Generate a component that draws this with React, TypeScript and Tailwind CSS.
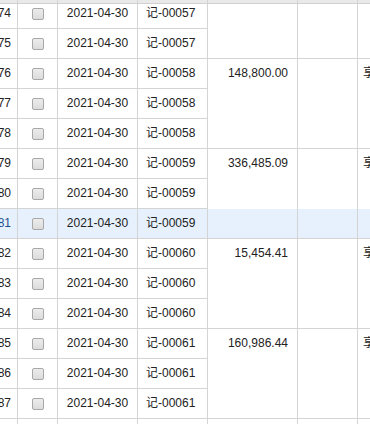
import React from "react";

type Row = { n: number; v: string; first: boolean; last: boolean; amount?: string; hl?: boolean };

const groups: { v: string; rows: number[]; amount?: string; topHidden?: boolean }[] = [
  { v: "00057", rows: [74, 75], topHidden: true },
  { v: "00058", rows: [76, 77, 78], amount: "148,800.00" },
  { v: "00059", rows: [79, 80, 81], amount: "336,485.09" },
  { v: "00060", rows: [82, 83, 84], amount: "15,454.41" },
  { v: "00061", rows: [85, 86, 87], amount: "160,986.44" },
  { v: "00062", rows: [88], amount: "" },
];

const rows: Row[] = [];
groups.forEach((g) => {
  g.rows.forEach((n, i) => {
    rows.push({
      n,
      v: g.v,
      first: i === 0 && !g.topHidden,
      last: i === g.rows.length - 1,
      amount: i === 0 ? g.amount : undefined,
      hl: n === 81,
    });
  });
});

function Checkbox() {
  return (
    <div className="w-[12px] h-[12px] rounded-[2px] border border-[#a8a8a8] bg-gradient-to-b from-[#ececec] to-[#dcdcdc]" />
  );
}

export default function App() {
  return (
    <div
      className="relative w-[370px] h-[424px] overflow-hidden bg-white text-[12px] text-[#222]"
      style={{ fontFamily: '"Liberation Sans", Arial, "Noto Sans CJK SC", sans-serif' }}
    >
      <div className="mt-[-1px] flex flex-col">
        {rows.map((r) => (
          <div key={r.n} className={`flex h-[30px] shrink-0 ${r.hl ? "bg-[#e6f1fd]" : ""}`}>
            <div className={`w-[18px] shrink-0 border-r border-b border-[#d4d4d4] overflow-hidden flex justify-end pr-[6px] leading-[29px] whitespace-nowrap ${r.hl ? "text-[#1f4e8c]" : ""}`}>
              1{r.n}
            </div>
            <div className="w-[40px] shrink-0 border-r border-b border-[#d4d4d4] flex items-center justify-center">
              <Checkbox />
            </div>
            <div className="w-[80px] shrink-0 border-r border-b border-[#d4d4d4] text-center leading-[29px]">
              2021-04-30
            </div>
            <div className="w-[70px] shrink-0 border-r border-b border-[#d4d4d4] pl-[8px] leading-[29px] whitespace-nowrap">
              记-{r.v}
            </div>
            <div className={`w-[90px] shrink-0 border-r border-[#d4d4d4] ${r.last ? "border-b" : ""} text-right pr-[9px] leading-[29px]`}>
              {r.amount ?? ""}
            </div>
            <div className={`w-[60px] shrink-0 border-r border-[#d4d4d4] ${r.last ? "border-b" : ""}`} />
            <div className={`w-[120px] shrink-0 border-r border-[#d4d4d4] ${r.last ? "border-b" : ""} pl-[5px] leading-[29px] whitespace-nowrap`}>
              {r.first && r.amount ? "享受" : ""}
            </div>
          </div>
        ))}
      </div>
      <div className="absolute left-0 top-0 flex h-[4px] w-[500px] bg-[#e9e9e9] border-b border-[#d0d0d0]">
        <div className="w-[18px] shrink-0 border-r border-[#d4d4d4]" />
        <div className="w-[40px] shrink-0 border-r border-[#d4d4d4]" />
        <div className="w-[80px] shrink-0 border-r border-[#d4d4d4]" />
        <div className="w-[70px] shrink-0 border-r border-[#d4d4d4]" />
        <div className="w-[90px] shrink-0 border-r border-[#d4d4d4]" />
        <div className="w-[60px] shrink-0 border-r border-[#d4d4d4]" />
        <div className="w-[120px] shrink-0 border-r border-[#d4d4d4]" />
      </div>
    </div>
  );
}
